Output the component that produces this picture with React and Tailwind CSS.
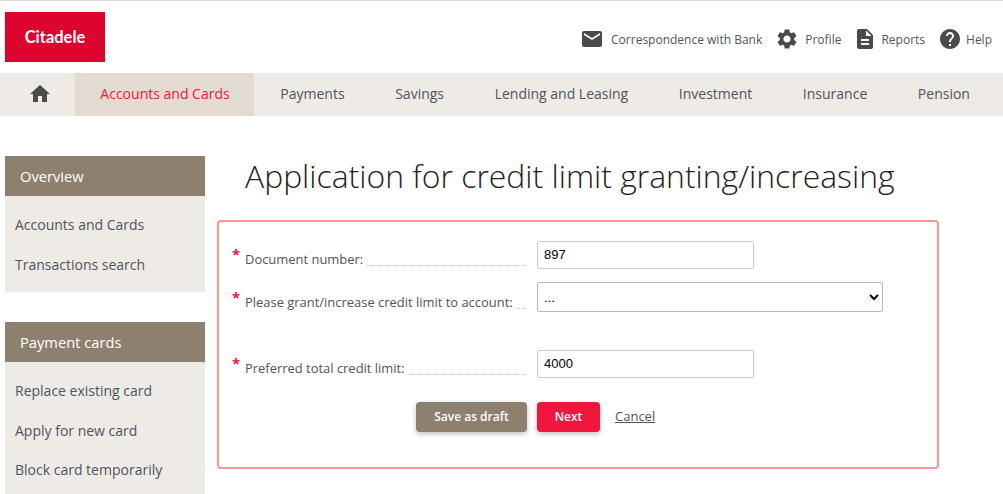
const font = { fontFamily: '"Open Sans", sans-serif' };
const arial = { fontFamily: '"Liberation Sans", sans-serif' };

const navItems = ['Payments', 'Savings', 'Lending and Leasing', 'Investment', 'Insurance', 'Pension'];

function Icon({ d }) {
  return (
    <svg viewBox="0 0 24 24" className="h-6 w-6 shrink-0 fill-[#4a4a4a]">
      <path d={d} />
    </svg>
  );
}

const icons = {
  mail: 'M20 4H4c-1.1 0-1.99.9-1.99 2L2 18c0 1.1.9 2 2 2h16c1.1 0 2-.9 2-2V6c0-1.1-.9-2-2-2zm0 4l-8 5-8-5V6l8 5 8-5v2z',
  gear: 'M19.14 12.94c.04-.3.06-.61.06-.94 0-.32-.02-.64-.07-.94l2.03-1.58c.18-.14.23-.41.12-.61l-1.92-3.32c-.12-.22-.37-.29-.59-.22l-2.39.96c-.5-.38-1.03-.7-1.62-.94l-.36-2.54c-.04-.24-.24-.41-.48-.41h-3.84c-.24 0-.43.17-.47.41l-.36 2.54c-.59.24-1.13.57-1.62.94l-2.39-.96c-.22-.08-.47 0-.59.22L2.74 8.87c-.12.21-.08.47.12.61l2.03 1.58c-.05.3-.09.63-.09.94s.02.64.07.94l-2.03 1.58c-.18.14-.23.41-.12.61l1.92 3.32c.12.22.37.29.59.22l2.39-.96c.5.38 1.03.7 1.62.94l.36 2.54c.05.24.24.41.48.41h3.84c.24 0 .44-.17.47-.41l.36-2.54c.59-.24 1.13-.56 1.62-.94l2.39.96c.22.08.47 0 .59-.22l1.92-3.32c.12-.22.07-.47-.12-.61l-2.01-1.58zM12 15.6c-1.98 0-3.6-1.62-3.6-3.6s1.62-3.6 3.6-3.6 3.6 1.62 3.6 3.6-1.62 3.6-3.6 3.6z',
  doc: 'M14 2H6c-1.1 0-1.99.9-1.99 2L4 20c0 1.1.89 2 1.99 2H18c1.1 0 2-.9 2-2V8l-6-6zm2 16H8v-2h8v2zm0-4H8v-2h8v2zm-3-5V3.5L18.5 9H13z',
  help: 'M12 2C6.48 2 2 6.48 2 12s4.48 10 10 10 10-4.48 10-10S17.52 2 12 2zm1 17h-2v-2h2v2zm2.07-7.75l-.9.92C13.45 12.9 13 13.5 13 15h-2v-.5c0-1.1.45-2.1 1.17-2.83l1.24-1.26c.37-.36.59-.86.59-1.41 0-1.1-.9-2-2-2s-2 .9-2 2H8c0-2.21 1.79-4 4-4s4 1.79 4 4c0 .88-.36 1.68-.93 2.25z',
  home: 'M10 20v-6h4v6h5v-8h3L12 3 2 12h3v8z',
};

function TopLink({ icon, label, className }) {
  return (
    <a className={`flex items-center text-[12px] text-[#4d5560] ${className}`}>
      <Icon d={icons[icon]} />
      <span className="translate-y-[1px]">{label}</span>
    </a>
  );
}

function SideSection({ title, items, className }) {
  return (
    <div className={className}>
      <div className="flex h-10 items-center bg-[#8d806e] pl-[15px] text-[14.7px] font-medium text-white">{title}</div>
      <ul className="bg-[#eeeae6] pt-[9px] pb-[8px] text-[14px] text-[#4d5560]">
        {items.map((item) => (
          <li key={item} className="flex h-[39.5px] items-center pl-[10px]">{item}</li>
        ))}
      </ul>
    </div>
  );
}

function Field({ label, className, children }) {
  return (
    <div className={`flex items-end ${className}`}>
      <span className="mb-[5px] w-[14px] pl-[1px] text-[15px] leading-[20px] font-bold text-[#f0163c]">*</span>
      <div className="flex w-[281px] items-end">
        <span className="whitespace-nowrap text-[12.95px] leading-[20px] text-[#4d5560]">{label}</span>
        <span className="ml-[4px] mb-[3px] flex-1 border-b border-dotted border-[#c4c4c4]" />
      </div>
      <div className="ml-[11px]">{children}</div>
    </div>
  );
}

const inputClass = 'block h-[28px] w-[217px] rounded-[2px] border border-[#cccccc] bg-white px-[6px] pb-[2px] text-[13px] text-black';

export default function App() {
  return (
    <div className="h-[494px] overflow-hidden bg-white" style={font}>
      <div className="h-px bg-[#dddddd]" />

      <header className="flex h-[72px] items-start justify-between pl-[5px] pr-[11px]">
        <div className="mt-[11px] flex h-[50px] w-[100px] items-center justify-center bg-[#dc0530] text-[16.5px] font-bold text-white" style={{ fontFamily: 'Lato, sans-serif' }}>
          Citadele
        </div>
        <div className="mt-[26px] flex items-center gap-[13px]">
          <TopLink icon="mail" label="Correspondence with Bank" className="gap-[7px]" />
          <TopLink icon="gear" label="Profile" className="gap-[6px]" />
          <TopLink icon="doc" label="Reports" className="-ml-px gap-[4px]" />
          <TopLink icon="help" label="Help" className="gap-[4px]" />
        </div>
      </header>

      <nav className="flex h-[43px] items-stretch bg-[#eeeae6] text-[14px] text-[#4d5560]">
        <div className="flex w-[75px] shrink-0 items-center justify-center pb-[2px] pl-[5px]">
          <Icon d={icons.home} />
        </div>
        <a className="flex w-[179px] shrink-0 items-center justify-center bg-[#e3dbd2] pb-[3px] pl-px text-[#f0163c]">Accounts and Cards</a>
        <div className="ml-px flex">
          {navItems.map((item) => (
            <a key={item} className="flex items-center px-[25.3px] pb-[3px] whitespace-nowrap">{item}</a>
          ))}
        </div>
      </nav>

      <div className="flex items-start pl-[5px] pt-10">
        <aside className="w-[200px] shrink-0">
          <SideSection title="Overview" items={['Accounts and Cards', 'Transactions search']} />
          <SideSection className="mt-[30px]" title="Payment cards" items={['Replace existing card', 'Apply for new card', 'Block card temporarily']} />
        </aside>

        <main className="ml-[12px] w-[722px]">
          <h1 className="h-[64px] pl-[28px] text-[31.9px] leading-[40px] font-light whitespace-nowrap text-[#222222]">
            Application for credit limit granting/increasing
          </h1>
          <form className="h-[249px] rounded-[4px] border-2 border-[#ff9494] pl-[12px] pt-[19px]">
            <Field label="Document number:">
              <input className={inputClass} style={arial} defaultValue="897" />
            </Field>
            <Field label="Please grant/increase credit limit to account:" className="mt-[13px]">
              <select className="block h-[30px] w-[346px] rounded-[2px] border border-[#b8b8b8] bg-white px-[2px] text-[13px] text-black" style={arial}>
                <option>...</option>
              </select>
            </Field>
            <Field label="Preferred total credit limit:" className="mt-[38px]">
              <input className={inputClass} style={arial} defaultValue="4000" />
            </Field>
            <div className="mt-[24px] flex items-center pl-[185px]">
              <button type="button" className="h-[30px] w-[111px] rounded-[4px] bg-[#8d806e] text-[12px] font-semibold text-white shadow-[0_2px_5px_rgba(0,0,0,0.25)]">Save as draft</button>
              <button type="button" className="ml-[10px] h-[30px] w-[63px] rounded-[4px] bg-[#f0163c] text-[12px] font-semibold text-white shadow-[0_2px_5px_rgba(0,0,0,0.25)]">Next</button>
              <a className="ml-[15px] text-[13px] text-[#4d5560] underline">Cancel</a>
            </div>
          </form>
        </main>
      </div>
    </div>
  );
}
